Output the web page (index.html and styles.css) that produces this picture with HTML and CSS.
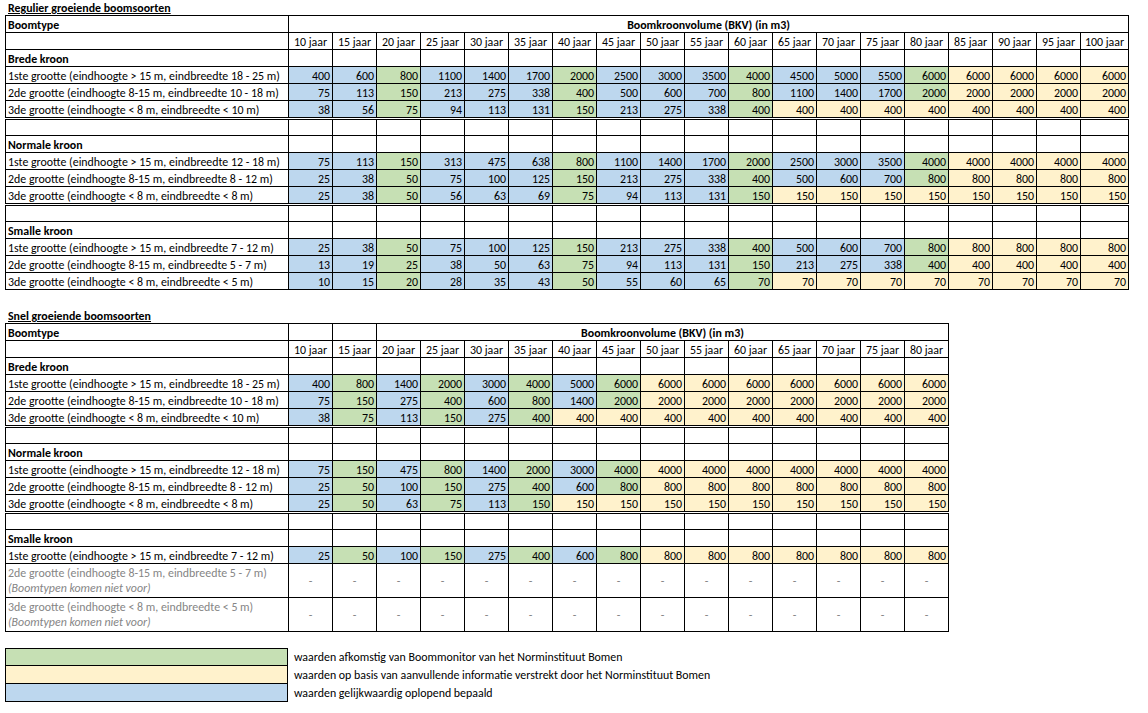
FILE: index.html
```html
<!DOCTYPE html>
<html lang="nl">
<head>
<meta charset="utf-8">
<title>Boomkroonvolume</title>
<link rel="stylesheet" href="styles.css">
</head>
<body>
<div class="page">
  <div class="title">Regulier groeiende boomsoorten</div>
  <table class="grid t1">
    <colgroup>
      <col class="c-label"><col class="c-y"><col class="c-y"><col class="c-y"><col class="c-y"><col class="c-y"><col class="c-y"><col class="c-y"><col class="c-y"><col class="c-y"><col class="c-y"><col class="c-y"><col class="c-y"><col class="c-y"><col class="c-y"><col class="c-y"><col class="c-y"><col class="c-y"><col class="c-y"><col class="c-last">
    </colgroup>
    <tr class="hrow"><td class="l bold">Boomtype</td><td colspan="19" class="c bold">Boomkroonvolume (BKV) (in m3)</td></tr>
    <tr class="hrow"><td></td><td class="c">10 jaar</td><td class="c">15 jaar</td><td class="c">20 jaar</td><td class="c">25 jaar</td><td class="c">30 jaar</td><td class="c">35 jaar</td><td class="c">40 jaar</td><td class="c">45 jaar</td><td class="c">50 jaar</td><td class="c">55 jaar</td><td class="c">60 jaar</td><td class="c">65 jaar</td><td class="c">70 jaar</td><td class="c">75 jaar</td><td class="c">80 jaar</td><td class="c">85 jaar</td><td class="c">90 jaar</td><td class="c">95 jaar</td><td class="c">100 jaar</td></tr>
    <tr><td class="l bold">Brede kroon</td><td></td><td></td><td></td><td></td><td></td><td></td><td></td><td></td><td></td><td></td><td></td><td></td><td></td><td></td><td></td><td></td><td></td><td></td><td></td></tr>
    <tr><td class="l">1ste grootte (eindhoogte &gt; 15 m, eindbreedte 18 - 25 m)</td><td class="b">400</td><td class="b">600</td><td class="g">800</td><td class="b">1100</td><td class="b">1400</td><td class="b">1700</td><td class="g">2000</td><td class="b">2500</td><td class="b">3000</td><td class="b">3500</td><td class="g">4000</td><td class="b">4500</td><td class="b">5000</td><td class="b">5500</td><td class="g">6000</td><td class="y">6000</td><td class="y">6000</td><td class="y">6000</td><td class="y">6000</td></tr>
    <tr><td class="l">2de grootte (eindhoogte 8-15 m, eindbreedte 10 - 18 m)</td><td class="b">75</td><td class="b">113</td><td class="g">150</td><td class="b">213</td><td class="b">275</td><td class="b">338</td><td class="g">400</td><td class="b">500</td><td class="b">600</td><td class="b">700</td><td class="g">800</td><td class="b">1100</td><td class="b">1400</td><td class="b">1700</td><td class="g">2000</td><td class="y">2000</td><td class="y">2000</td><td class="y">2000</td><td class="y">2000</td></tr>
    <tr><td class="l">3de grootte (eindhoogte &lt; 8 m, eindbreedte &lt; 10 m)</td><td class="b">38</td><td class="b">56</td><td class="g">75</td><td class="b">94</td><td class="b">113</td><td class="b">131</td><td class="g">150</td><td class="b">213</td><td class="b">275</td><td class="b">338</td><td class="g">400</td><td class="y">400</td><td class="y">400</td><td class="y">400</td><td class="y">400</td><td class="y">400</td><td class="y">400</td><td class="y">400</td><td class="y">400</td></tr>
    <tr class="sep"><td></td><td></td><td></td><td></td><td></td><td></td><td></td><td></td><td></td><td></td><td></td><td></td><td></td><td></td><td></td><td></td><td></td><td></td><td></td><td></td></tr>
    <tr><td class="l bold">Normale kroon</td><td></td><td></td><td></td><td></td><td></td><td></td><td></td><td></td><td></td><td></td><td></td><td></td><td></td><td></td><td></td><td></td><td></td><td></td><td></td></tr>
    <tr><td class="l">1ste grootte (eindhoogte &gt; 15 m, eindbreedte 12 - 18 m)</td><td class="b">75</td><td class="b">113</td><td class="g">150</td><td class="b">313</td><td class="b">475</td><td class="b">638</td><td class="g">800</td><td class="b">1100</td><td class="b">1400</td><td class="b">1700</td><td class="g">2000</td><td class="b">2500</td><td class="b">3000</td><td class="b">3500</td><td class="g">4000</td><td class="y">4000</td><td class="y">4000</td><td class="y">4000</td><td class="y">4000</td></tr>
    <tr><td class="l">2de grootte (eindhoogte 8-15 m, eindbreedte 8 - 12 m)</td><td class="b">25</td><td class="b">38</td><td class="g">50</td><td class="b">75</td><td class="b">100</td><td class="b">125</td><td class="g">150</td><td class="b">213</td><td class="b">275</td><td class="b">338</td><td class="g">400</td><td class="b">500</td><td class="b">600</td><td class="b">700</td><td class="g">800</td><td class="y">800</td><td class="y">800</td><td class="y">800</td><td class="y">800</td></tr>
    <tr><td class="l">3de grootte (eindhoogte &lt; 8 m, eindbreedte &lt; 8 m)</td><td class="b">25</td><td class="b">38</td><td class="g">50</td><td class="b">56</td><td class="b">63</td><td class="b">69</td><td class="g">75</td><td class="b">94</td><td class="b">113</td><td class="b">131</td><td class="g">150</td><td class="y">150</td><td class="y">150</td><td class="y">150</td><td class="y">150</td><td class="y">150</td><td class="y">150</td><td class="y">150</td><td class="y">150</td></tr>
    <tr class="sep"><td></td><td></td><td></td><td></td><td></td><td></td><td></td><td></td><td></td><td></td><td></td><td></td><td></td><td></td><td></td><td></td><td></td><td></td><td></td><td></td></tr>
    <tr><td class="l bold">Smalle kroon</td><td></td><td></td><td></td><td></td><td></td><td></td><td></td><td></td><td></td><td></td><td></td><td></td><td></td><td></td><td></td><td></td><td></td><td></td><td></td></tr>
    <tr><td class="l">1ste grootte (eindhoogte &gt; 15 m, eindbreedte 7 - 12 m)</td><td class="b">25</td><td class="b">38</td><td class="g">50</td><td class="b">75</td><td class="b">100</td><td class="b">125</td><td class="g">150</td><td class="b">213</td><td class="b">275</td><td class="b">338</td><td class="g">400</td><td class="b">500</td><td class="b">600</td><td class="b">700</td><td class="g">800</td><td class="y">800</td><td class="y">800</td><td class="y">800</td><td class="y">800</td></tr>
    <tr><td class="l">2de grootte (eindhoogte 8-15 m, eindbreedte 5 - 7 m)</td><td class="b">13</td><td class="b">19</td><td class="g">25</td><td class="b">38</td><td class="b">50</td><td class="b">63</td><td class="g">75</td><td class="b">94</td><td class="b">113</td><td class="b">131</td><td class="g">150</td><td class="b">213</td><td class="b">275</td><td class="b">338</td><td class="g">400</td><td class="y">400</td><td class="y">400</td><td class="y">400</td><td class="y">400</td></tr>
    <tr><td class="l">3de grootte (eindhoogte &lt; 8 m, eindbreedte &lt; 5 m)</td><td class="b">10</td><td class="b">15</td><td class="g">20</td><td class="b">28</td><td class="b">35</td><td class="b">43</td><td class="g">50</td><td class="b">55</td><td class="b">60</td><td class="b">65</td><td class="g">70</td><td class="y">70</td><td class="y">70</td><td class="y">70</td><td class="y">70</td><td class="y">70</td><td class="y">70</td><td class="y">70</td><td class="y">70</td></tr>
  </table>

  <div class="title title2">Snel groeiende boomsoorten</div>
  <table class="grid t2">
    <colgroup>
      <col class="c-label"><col class="c-y"><col class="c-y"><col class="c-y"><col class="c-y"><col class="c-y"><col class="c-y"><col class="c-y"><col class="c-y"><col class="c-y"><col class="c-y"><col class="c-y"><col class="c-y"><col class="c-y"><col class="c-y"><col class="c-y">
    </colgroup>
    <tr class="hrow"><td class="l bold">Boomtype</td><td></td><td></td><td colspan="13" class="c bold">Boomkroonvolume (BKV) (in m3)</td></tr>
    <tr class="hrow"><td></td><td class="c">10 jaar</td><td class="c">15 jaar</td><td class="c">20 jaar</td><td class="c">25 jaar</td><td class="c">30 jaar</td><td class="c">35 jaar</td><td class="c">40 jaar</td><td class="c">45 jaar</td><td class="c">50 jaar</td><td class="c">55 jaar</td><td class="c">60 jaar</td><td class="c">65 jaar</td><td class="c">70 jaar</td><td class="c">75 jaar</td><td class="c">80 jaar</td></tr>
    <tr><td class="l bold">Brede kroon</td><td></td><td></td><td></td><td></td><td></td><td></td><td></td><td></td><td></td><td></td><td></td><td></td><td></td><td></td><td></td></tr>
    <tr><td class="l">1ste grootte (eindhoogte &gt; 15 m, eindbreedte 18 - 25 m)</td><td class="b">400</td><td class="g">800</td><td class="b">1400</td><td class="g">2000</td><td class="b">3000</td><td class="g">4000</td><td class="b">5000</td><td class="g">6000</td><td class="y">6000</td><td class="y">6000</td><td class="y">6000</td><td class="y">6000</td><td class="y">6000</td><td class="y">6000</td><td class="y">6000</td></tr>
    <tr><td class="l">2de grootte (eindhoogte 8-15 m, eindbreedte 10 - 18 m)</td><td class="b">75</td><td class="g">150</td><td class="b">275</td><td class="g">400</td><td class="b">600</td><td class="g">800</td><td class="b">1400</td><td class="g">2000</td><td class="y">2000</td><td class="y">2000</td><td class="y">2000</td><td class="y">2000</td><td class="y">2000</td><td class="y">2000</td><td class="y">2000</td></tr>
    <tr><td class="l">3de grootte (eindhoogte &lt; 8 m, eindbreedte &lt; 10 m)</td><td class="b">38</td><td class="g">75</td><td class="b">113</td><td class="g">150</td><td class="b">275</td><td class="g">400</td><td class="y">400</td><td class="y">400</td><td class="y">400</td><td class="y">400</td><td class="y">400</td><td class="y">400</td><td class="y">400</td><td class="y">400</td><td class="y">400</td></tr>
    <tr class="sep"><td></td><td></td><td></td><td></td><td></td><td></td><td></td><td></td><td></td><td></td><td></td><td></td><td></td><td></td><td></td><td></td></tr>
    <tr><td class="l bold">Normale kroon</td><td></td><td></td><td></td><td></td><td></td><td></td><td></td><td></td><td></td><td></td><td></td><td></td><td></td><td></td><td></td></tr>
    <tr><td class="l">1ste grootte (eindhoogte &gt; 15 m, eindbreedte 12 - 18 m)</td><td class="b">75</td><td class="g">150</td><td class="b">475</td><td class="g">800</td><td class="b">1400</td><td class="g">2000</td><td class="b">3000</td><td class="g">4000</td><td class="y">4000</td><td class="y">4000</td><td class="y">4000</td><td class="y">4000</td><td class="y">4000</td><td class="y">4000</td><td class="y">4000</td></tr>
    <tr><td class="l">2de grootte (eindhoogte 8-15 m, eindbreedte 8 - 12 m)</td><td class="b">25</td><td class="g">50</td><td class="b">100</td><td class="g">150</td><td class="b">275</td><td class="g">400</td><td class="b">600</td><td class="g">800</td><td class="y">800</td><td class="y">800</td><td class="y">800</td><td class="y">800</td><td class="y">800</td><td class="y">800</td><td class="y">800</td></tr>
    <tr><td class="l">3de grootte (eindhoogte &lt; 8 m, eindbreedte &lt; 8 m)</td><td class="b">25</td><td class="g">50</td><td class="b">63</td><td class="g">75</td><td class="b">113</td><td class="g">150</td><td class="y">150</td><td class="y">150</td><td class="y">150</td><td class="y">150</td><td class="y">150</td><td class="y">150</td><td class="y">150</td><td class="y">150</td><td class="y">150</td></tr>
    <tr class="sep"><td></td><td></td><td></td><td></td><td></td><td></td><td></td><td></td><td></td><td></td><td></td><td></td><td></td><td></td><td></td><td></td></tr>
    <tr><td class="l bold">Smalle kroon</td><td></td><td></td><td></td><td></td><td></td><td></td><td></td><td></td><td></td><td></td><td></td><td></td><td></td><td></td><td></td></tr>
    <tr><td class="l">1ste grootte (eindhoogte &gt; 15 m, eindbreedte 7 - 12 m)</td><td class="b">25</td><td class="g">50</td><td class="b">100</td><td class="g">150</td><td class="b">275</td><td class="g">400</td><td class="b">600</td><td class="g">800</td><td class="y">800</td><td class="y">800</td><td class="y">800</td><td class="y">800</td><td class="y">800</td><td class="y">800</td><td class="y">800</td></tr>
    <tr class="na"><td class="l">2de grootte (eindhoogte 8-15 m, eindbreedte 5 - 7 m)<br><i>(Boomtypen komen niet voor)</i></td><td>-</td><td>-</td><td>-</td><td>-</td><td>-</td><td>-</td><td>-</td><td>-</td><td>-</td><td>-</td><td>-</td><td>-</td><td>-</td><td>-</td><td>-</td></tr>
    <tr class="na"><td class="l">3de grootte (eindhoogte &lt; 8 m, eindbreedte &lt; 5 m)<br><i>(Boomtypen komen niet voor)</i></td><td>-</td><td>-</td><td>-</td><td>-</td><td>-</td><td>-</td><td>-</td><td>-</td><td>-</td><td>-</td><td>-</td><td>-</td><td>-</td><td>-</td><td>-</td></tr>
  </table>

  <div class="legend">
    <div class="legend-row"><span class="swatch g"></span><span class="legend-text">waarden afkomstig van Boommonitor van het Norminstituut Bomen</span></div>
    <div class="legend-row"><span class="swatch y"></span><span class="legend-text">waarden op basis van aanvullende informatie verstrekt door het Norminstituut Bomen</span></div>
    <div class="legend-row"><span class="swatch b"></span><span class="legend-text">waarden gelijkwaardig oplopend bepaald</span></div>
  </div>
</div>
</body>
</html>
```
FILE: styles.css
```css
html, body {
  margin: 0;
  padding: 0;
  background: #ffffff;
}
body {
  font-family: Carlito, Calibri, Lato, "Open Sans", sans-serif;
  font-size: 11.9px;
  color: #000000;
}
.page {
  padding: 1px 0 0 5px;
}
.title {
  font-weight: bold;
  text-decoration: underline;
  height: 14px;
  line-height: 14px;
  padding-left: 3px;
}
.title2 {
  margin-top: 19px;
}
.grid {
  border-collapse: collapse;
  table-layout: fixed;
}
.t1 { width: 1123px; }
.t2 { width: 943px; }
.c-label { width: 283px; }
.c-y { width: 44px; }
.c-last { width: 48px; }
.grid td {
  border: 1px solid #000000;
  height: 16px;
  padding: 0 2px 0 2px;
  line-height: 14px;
  vertical-align: bottom;
  text-align: right;
  white-space: nowrap;
  overflow: hidden;
}
.grid tr.hrow td {
  height: 16px;
}
.grid td.l {
  text-align: left;
}
.grid td.c {
  text-align: center;
}
.bold {
  font-weight: bold;
}
.grid tr.sep td {
  border-top: 3px double #000000;
  height: 15px;
}
.grid tr.na td {
  height: 33px;
  color: #858585;
  text-align: center;
  vertical-align: middle;
}
.grid tr.na td.l {
  text-align: left;
  line-height: 15px;
}
.b { background: #bdd7ee; }
.g { background: #c6e0b4; }
.y { background: #fff2cc; }
.legend {
  margin-top: 16px;
  display: flex;
  flex-direction: column;
}
.legend-row {
  display: flex;
  align-items: center;
  height: 18px;
}
.swatch {
  width: 281px;
  height: 17px;
  border: 1px solid #000000;
  border-top-width: 0;
  flex: none;
}
.legend-row:first-child .swatch {
  border-top-width: 1px;
  height: 16px;
}
.legend-text {
  padding-left: 6px;
}
```
